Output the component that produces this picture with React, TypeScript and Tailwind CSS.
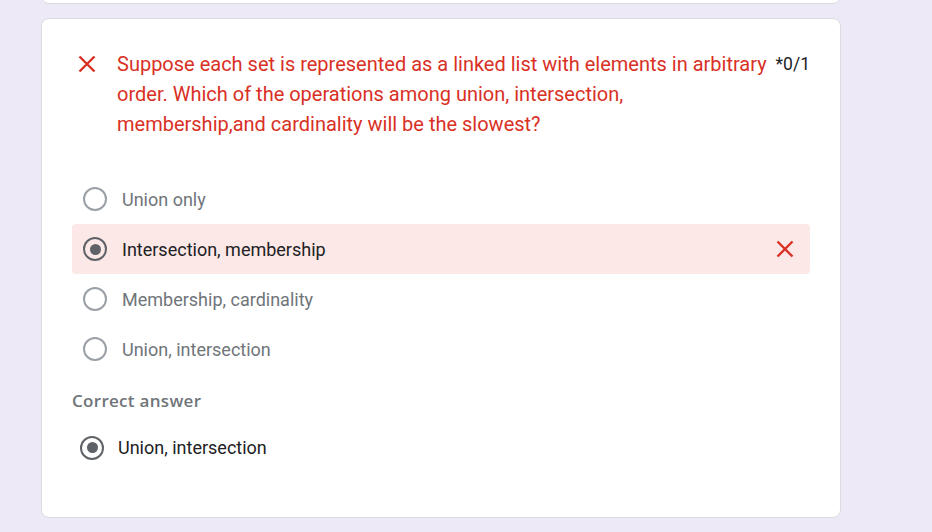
const options = [
  { label: "Union only", selected: false },
  { label: "Intersection, membership", selected: true },
  { label: "Membership, cardinality", selected: false },
  { label: "Union, intersection", selected: false },
];

function CloseIcon({ size = 18 }: { size?: number }) {
  return (
    <svg width={size} height={size} viewBox="0 0 18 18" fill="none">
      <path d="M1.5 1.5 L16.5 16.5 M16.5 1.5 L1.5 16.5" stroke="#d93025" strokeWidth="2.4" />
    </svg>
  );
}

function Radio({ checked }: { checked: boolean }) {
  return (
    <div
      className={`w-6 h-6 shrink-0 rounded-full border-2 flex items-center justify-center ${
        checked ? "border-[#5f6368]" : "border-[#9aa0a6]"
      }`}
    >
      {checked && <div className="w-[11px] h-[11px] rounded-full bg-[#5f6368]" />}
    </div>
  );
}

export default function App() {
  return (
    <div
      className="w-[932px] h-[532px] overflow-hidden bg-[#ede9f7] pl-[41px]"
      style={{ fontFamily: "Roboto, 'Liberation Sans', sans-serif" }}
    >
      {/* previous card, mostly scrolled away */}
      <div className="w-[800px] h-[24px] -mt-[20px] bg-white border border-[#dadce0] rounded-lg" />

      <div className="mt-[14px] w-[800px] h-[500px] bg-white border border-[#dadce0] rounded-lg px-[30px] pt-[30px]">
        {/* Question */}
        <div className="flex items-start">
          <div className="w-[45px] shrink-0 pl-[6px] pt-[6px]">
            <CloseIcon />
          </div>
          <p className="flex-1 text-[20px] leading-[30px] text-[#d93025]">
            Suppose each set is represented as a linked list with elements in arbitrary order. Which of the
            operations among union, intersection, membership,and cardinality will be the slowest?
          </p>
          <div className="ml-[8px] text-[17.5px] leading-[30px] text-[#202124] whitespace-nowrap">*0/1</div>
        </div>

        {/* Options */}
        <div className="mt-[35px]">
          {options.map((o) => (
            <div
              key={o.label}
              className={`h-[50px] flex items-center pl-[11px] pr-[16px] rounded ${
                o.selected ? "bg-[#fce8e6]" : ""
              }`}
            >
              <Radio checked={o.selected} />
              <span
                className={`ml-[15px] flex-1 text-[18px] ${
                  o.selected ? "text-[#202124]" : "text-[#70757a]"
                }`}
              >
                {o.label}
              </span>
              {o.selected && <CloseIcon />}
            </div>
          ))}
        </div>

        {/* Correct answer */}
        <div
          className="mt-[16px] text-[17px] leading-[22px] font-semibold tracking-[0.3px] text-[#70757a]"
          style={{ fontFamily: "'Open Sans', Roboto, sans-serif" }}
        >
          Correct answer
        </div>
        <div className="mt-[22px] flex items-center pl-[8px]">
          <Radio checked />
          <span className="ml-[14px] text-[18px] text-[#202124]">Union, intersection</span>
        </div>
      </div>
    </div>
  );
}
